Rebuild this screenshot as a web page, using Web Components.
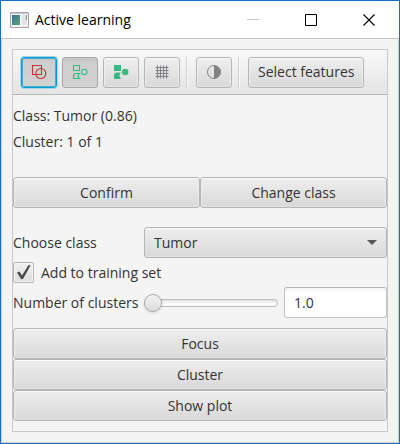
<!DOCTYPE html>
<html lang="en">
<head>
<meta charset="utf-8">
<title>Active learning</title>
<style>
  body { margin: 0; background: #f4f4f4; color: #333; font: 14px/20px "Open Sans", "Noto Sans", sans-serif; }
</style>
</head>
<body>
<app-window caption="Active learning">
  <tool-bar>
    <icon-toggle label="Cell selection" pressed focused>
      <svg width="16" height="16" viewBox="0 0 16 16" fill="none" stroke="#cd2f3b" stroke-width="1.100"><path d="M1.500 1.500h9v9h-9z"/><circle cx="9.800" cy="9.500" r="5"/></svg>
    </icon-toggle>
    <icon-toggle label="Show detections" pressed>
      <svg width="16" height="16" viewBox="0 0 16 16" fill="none" stroke="#36b986" stroke-width="1.100"><path d="M1.500 1.500h6v5h-6z"/><circle cx="12.300" cy="8" r="2.700"/><path d="M1.500 14.500v-2.500q0-2.500 2.500-2.500h3.500q-3 2.500 0 5z"/></svg>
    </icon-toggle>
    <icon-toggle label="Fill detections">
      <svg width="16" height="16" viewBox="0 0 16 16" fill="#36b986"><path d="M1 1h7v6h-7z"/><circle cx="12.200" cy="8" r="3.200"/><path d="M1 15v-3.500q0-3 3-3h4q-3 3 0 6.500z"/></svg>
    </icon-toggle>
    <icon-toggle label="Show grid">
      <svg width="16" height="16" viewBox="0 0 16 16" stroke="#85828a" stroke-width="1.100"><path d="M3.500 1.500v13M6.500 1.500v13M9.500 1.500v13M12.500 1.500v13M1.500 3.500h13M1.500 6.500h13M1.500 9.500h13M1.500 12.500h13"/></svg>
    </icon-toggle>
    <tool-separator></tool-separator>
    <icon-toggle label="Brightness and contrast">
      <svg width="16" height="16" viewBox="0 0 16 16"><circle cx="8" cy="8" r="6.500" fill="none" stroke="#828286"/><path d="M8 1.500a6.500 6.500 0 0 1 0 13z" fill="#828286"/></svg>
    </icon-toggle>
    <tool-separator></tool-separator>
    <push-button>Select features</push-button>
  </tool-bar>
  <status-lines><span>Class: Tumor (0.86)</span><span>Cluster: 1 of 1</span></status-lines>
  <button-group direction="row">
    <push-button>Confirm</push-button>
    <push-button>Change class</push-button>
  </button-group>
  <class-form></class-form>
  <button-group>
    <push-button>Focus</push-button>
    <push-button>Cluster</push-button>
    <push-button>Show plot</push-button>
  </button-group>
</app-window>

<script>
const define = (name, html, setup) => {
  const template = document.createElement('template');
  template.innerHTML = '<style>*{box-sizing:border-box}</style>' + html;
  customElements.define(name, class extends HTMLElement {
    constructor() {
      super();
      this.attachShadow({ mode: 'open' }).append(template.content.cloneNode(true));
    }
    connectedCallback() { if (setup) setup(this, this.shadowRoot); }
  });
};

define('app-window', `
<style>
  :host { display: flex; flex-direction: column; box-sizing: border-box; min-height: 100vh; border: 1px solid #1b70c6; }
  header { display: flex; align-items: center; height: 38px; padding: 0 1px 0 9px; background: #fff; color: #000; border-bottom: 1px solid #c6c6c6; }
  h1 { flex: 1; margin: 0 0 0 6px; font-size: 14px; font-weight: 400; white-space: nowrap; }
  header button { display: grid; place-items: center; width: 58px; height: 37px; padding: 0; border: 0; background: none; }
  main { flex: 1; padding: 10px; border: 1px solid #d0d0d0; border-top: 0; }
  section { border: 1px solid #c8c8c8; padding-bottom: 10px; }
</style>
<header>
  <svg width="19" height="16" viewBox="0 0 19 16" aria-hidden="true">
    <defs><linearGradient id="g" x2="1" y2="1"><stop stop-color="#3f6f91"/><stop offset="1" stop-color="#55a775"/></linearGradient></defs>
    <path d="M.5.5h18v15H.5z" fill="#f2f2f4" stroke="#a6a6aa"/><path d="M1 1h17v1H1z" fill="#c9c9ce"/>
    <path d="M2 3h8v10H2z" fill="url(#g)"/><path d="M12 3h5v10h-5z" fill="#e4e4e8"/><path d="M16 3h1v5h-1z" fill="#5ba681"/>
  </svg>
  <h1></h1>
  <button aria-label="Minimize" disabled><svg width="12" height="12" stroke="#c4c4c4"><path d="M0 5.500h12"/></svg></button>
  <button aria-label="Maximize"><svg width="12" height="12" fill="none" stroke="#000"><path d="M.5.5h11v11H.5z"/></svg></button>
  <button aria-label="Close"><svg width="12" height="12" stroke="#000" stroke-width="1.100"><path d="M.5.5l11 11M11.500.5l-11 11"/></svg></button>
</header>
<main><section><slot></slot></section></main>`,
(host, root) => { root.querySelector('h1').textContent = host.getAttribute('caption'); });

define('tool-bar', `
<style>
  :host { display: flex; align-items: center; gap: 5px; height: 45px; padding: 0 8px; box-sizing: border-box;
    background: linear-gradient(#f8f8f8, #e4e4e4); border-bottom: 1px solid #b5b5b5; }
</style><slot></slot>`);

define('tool-separator', `
<style>:host { display: block; width: 2px; height: 31px; margin: 0 3px 0 1px; background: linear-gradient(90deg, #cfcfcf 50%, #fafafa 50%); }</style>`);

const face = `
  button { display: grid; place-items: center; width: 100%; height: 31px; margin: 0; padding: 0 9px; font: inherit; color: inherit; white-space: nowrap;
    border: 1px solid #b5b5b5; border-radius: 3px; background: linear-gradient(#eee, #d9d9d9); box-shadow: inset 0 1px #fbfbfb, inset 1px 0 #ededed, inset -1px 0 #ededed, inset 0 -1px #e3e3e3; }`;

define('push-button', `<style>:host { display: block; } ${face}</style><button type="button"><slot></slot></button>`);

define('icon-toggle', `
<style>
  :host { display: block; width: 36px; } ${face}
  button { padding: 0; }
  :host([pressed]) button { border-color: #a9a9a9; background: linear-gradient(#c4c4c4, #cecece 15%, #d2d2d2); box-shadow: none; }
  :host([focused]) button { border-color: #039ed3; box-shadow: 0 0 0 1px #a5d5e6, inset 0 0 0 1px #48abd0; }
</style><button type="button"><slot></slot></button>`,
(host, root) => {
  const button = root.querySelector('button');
  button.setAttribute('aria-label', host.getAttribute('label'));
  button.setAttribute('aria-pressed', host.hasAttribute('pressed'));
});

define('status-lines', `
<style>
  :host { display: flex; flex-direction: column; padding: 8px 0 22px; line-height: 26px; }
</style><slot></slot>`);

define('button-group', `
<style>
  :host { display: flex; flex-direction: column; }
  :host([direction=row]) { flex-direction: row; }
  :host([direction=row]) ::slotted(*) { flex: 1; }
</style><slot></slot>`);

define('class-form', `
<style>
  :host { display: grid; grid-template-columns: 131px 1fr; align-items: center; row-gap: 4px; margin: 19px 0 10px; }
  label { white-space: nowrap; }
  .combo { display: grid; align-items: center; }
  .combo > * { grid-area: 1 / 1; }
  select { appearance: none; width: 100%; height: 31px; padding: 0 9px; font: inherit; color: inherit; border: 1px solid #b5b5b5; border-radius: 3px;
    background: linear-gradient(#eee, #d9d9d9); box-shadow: inset 0 1px #fbfbfb, inset 0 -1px #e3e3e3; }
  .combo svg { justify-self: end; margin-right: 10px; pointer-events: none; }
  .check { grid-column: 1 / -1; display: flex; align-items: center; gap: 7px; height: 21px; }
  .box { display: grid; }
  .box > * { grid-area: 1 / 1; }
  .box svg { pointer-events: none; visibility: hidden; }
  .box input:checked + svg { visibility: visible; }
  input[type=checkbox] { appearance: none; width: 21px; height: 21px; margin: 0; border: 1px solid #b5b5b5; border-radius: 2px; background: linear-gradient(#f0f0f0, #dedede); box-shadow: inset 0 0 0 1px #f5f5f5; }
  .amount { display: grid; grid-template-columns: 1fr 103px; gap: 6px; align-items: center; }
  input[type=range] { appearance: none; width: 100%; min-width: 0; height: 18px; margin: 0; background: none; }
  input[type=range]::-webkit-slider-runnable-track { height: 8px; box-sizing: border-box; border: 1px solid #bdbdbd; border-radius: 4px; background: linear-gradient(#e2e2e2, #fafafa 60%); }
  input[type=range]::-webkit-slider-thumb { appearance: none; box-sizing: border-box; width: 18px; height: 18px; margin-top: -6px; margin-left: -1px; border: 1px solid #aaa; border-radius: 50%; background: linear-gradient(#f3f3f3, #dcdcdc); box-shadow: 0 1px 3px #0002; }
  input[type=text] { width: 100%; height: 31px; padding: 0 9px; font: inherit; color: inherit; border: 1px solid #c2c2c2; border-top-color: #b5b5b5; border-radius: 3px; background: linear-gradient(#f2f2f2, #fff 5px); }
</style>
<label for="cls">Choose class</label>
<div class="combo">
  <select id="cls"><option>Tumor</option></select>
  <svg width="10" height="5"><path d="M0 0h10L5 5z" fill="#555"/></svg>
</div>
<div class="check">
  <span class="box"><input type="checkbox" id="train" checked>
  <svg width="21" height="21" viewBox="0 0 21 21"><path d="M4 10.500l2.500-1 2.500 4L15.500 3l2 .5L10 17H8z" fill="#4b4b4b"/></svg></span>
  <label for="train">Add to training set</label>
</div>
<label for="count">Number of clusters</label>
<div class="amount">
  <input type="range" id="range" min="1" max="10" value="1" aria-label="Number of clusters slider">
  <input type="text" id="count" value="1.0">
</div>`);
</script>
</body>
</html>
